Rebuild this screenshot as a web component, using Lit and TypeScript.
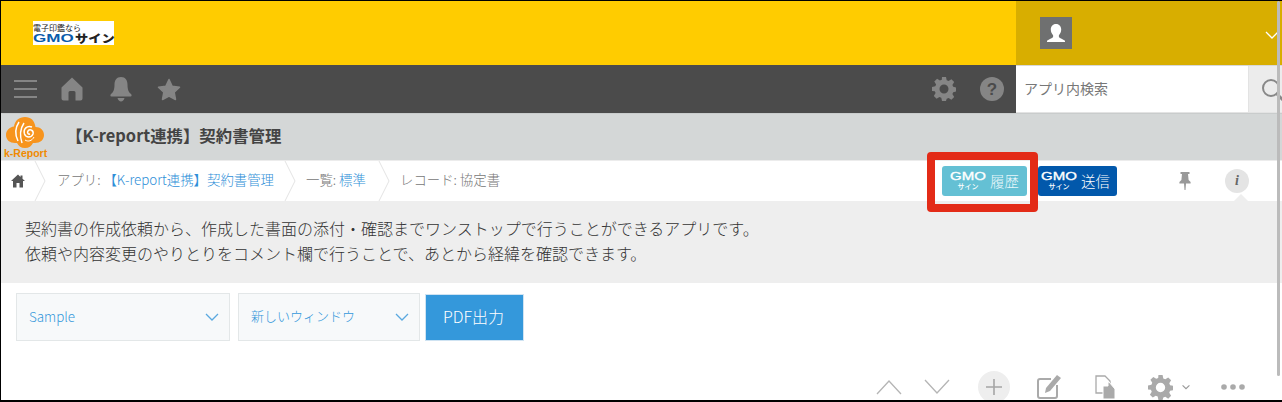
import { LitElement, html, css, svg } from "lit";
import { customElement } from "lit/decorators.js";

const chev = (c: string, w = 14, h = 8, sw = 1.3) => html`<svg width=${w} height=${h} viewBox="0 0 14 8"><path d="M1 1l6 6 6-6" fill="none" stroke=${c} stroke-width=${sw}/></svg>`;

const gmo = () => html`<span class="gmo"><b>GMO</b><i>サイン</i></span>`;

@customElement("app-root")
export class AppRoot extends LitElement {
  static styles = css`
    :host { display: block; position: relative; width: 1282px; height: 402px; overflow: hidden; box-sizing: border-box; border-top: 1px solid #000; border-left: 1px solid #000; border-bottom: 2px solid #000; background: #fff; font-family: "Noto Sans CJK JP", "Noto Sans", sans-serif; font-weight: 300; color: #555; }
    * { box-sizing: border-box; }
    .head { height: 64px; display: flex; background: #ffcc00; }
    .logo-wrap { flex: 1; padding: 20px 0 0 32px; }
    .logo { width: 81px; height: 24px; background: #fff; display: flex; flex-direction: column; line-height: 1; }
    .logo small { font-size: 8px; font-weight: 400; color: #222; height: 11px; padding-top: 2px; line-height: 9px; white-space: nowrap; }
    .logo span { display: flex; height: 13px; white-space: nowrap; }
    .logo b { font: 700 11px/13px "Liberation Sans", sans-serif; color: #0a5cab; display: block; width: 42px; transform: scaleX(1.55); transform-origin: left; }
    .logo em { font: 900 11px/13px "Noto Sans CJK JP", sans-serif; color: #222; display: block; transform: scaleX(1.2); transform-origin: left; }
    .user { width: 266px; background: #d8ae00; display: flex; justify-content: space-between; align-items: flex-start; padding: 16px 3px 0 24px; }
    .avatar { width: 32px; height: 32px; background: #6f7070; display: flex; }
    .user > svg { margin-top: 14px; }
    .nav { height: 48px; display: flex; background: #4b4b4b; }
    .nav-left { flex: 1; display: flex; align-items: center; padding-left: 13px; }
    .nav-left svg { display: block; }
    .burger { margin-right: 24px; }
    .bell { margin: 0 25px 0 27px; }
    .gear { margin-right: 24px; }
    .search { width: 266px; display: flex; background: #fff; border-bottom: 1px solid #e3e3e3; border-top: 1px solid #d8d8d8; }
    .search div:first-child { width: 233px; padding-left: 8px; font-size: 14px; font-weight: 400; line-height: 44px; color: #777; border-right: 1px solid #e3e3e3; }
    .search div:last-child { flex: 1; background: #ececec; padding: 12px 0 0 12px; overflow: hidden; }
    .title { height: 47px; background: #d4d7d7; display: flex; align-items: center; border-top: 1px solid #c9cccc; position: relative; }
    .k { width: 65px; padding: 1px 0 0 3px; display: flex; flex-direction: column; align-items: flex-start; line-height: 1; }
    .k svg { margin-left: 2px; display: block; }
    .k span { font: 700 10.5px/10px "Liberation Sans", sans-serif; color: #f08a00; }
    .title h1 { margin: 0 0 4px; font-size: 16.4px; font-weight: 700; color: #444; }
    .crumbs { height: 41px; display: flex; align-items: center; font-size: 13.4px; color: #777; border-top: 1px solid #ececec; }
    .c { height: 40px; display: flex; align-items: center; position: relative; white-space: pre; padding-bottom: 4px; }
    .c svg.sep { position: absolute; right: 0; top: 0; }
    .c a { color: #2f8fd8; }
    .c1 { width: 45px; padding-left: 10px; padding-bottom: 1px; }
    .c2 { width: 250px; padding-left: 11px; }
    .c3 { width: 94px; padding-left: 10px; }
    .c4 { flex: 1; padding-left: 10px; }
    .actions { display: flex; align-items: center; }
    .btn { height: 30px; border-radius: 3px; display: flex; align-items: center; color: #fff; font-size: 14.4px; gap: 4px; }
    .btn.a { width: 85px; background: #64c0d4; padding-left: 8px; margin-right: 11px; color: #e8f7fa; }
    .btn.b { width: 79px; background: #0258ab; padding-left: 3px; }
    .gmo { display: flex; flex-direction: column; align-items: center; width: 36px; line-height: 1; color: #fff; }
    .gmo b { font: 400 10px/10px "Liberation Sans", sans-serif; transform: scaleX(1.5); -webkit-text-stroke: .3px #fff; }
    .gmo i { font: 500 7px/8px "Noto Sans CJK JP", sans-serif; }
    .btn span:last-child { padding-bottom: 2px; }
    .pin { margin: 0 0 0 62px; }
    .info { width: 24px; height: 24px; border-radius: 50%; background: #e4e4e4; margin: 0 33px 0 34px; font: italic 700 14px/24px "Liberation Serif", serif; text-align: center; color: #666; }
    .desc { height: 82px; background: #eee; padding: 15px 0 0 24px; font-size: 16px; font-weight: 300; line-height: 25px; color: #333; position: relative; white-space: nowrap; }
    .desc::before { content: ""; position: absolute; right: 34px; top: -7px; border: 7px solid transparent; border-top: 0; border-bottom-color: #eee; }
    .tools { display: flex; padding: 10px 0 0 15px; height: 69px; }
    .sel { height: 48px; border: 1px solid #e3e7e8; background: #f7f9fa; display: flex; align-items: center; justify-content: space-between; color: #3498db; font-size: 13px; padding-bottom: 3px; }
    .sel svg { margin-top: 2px; }
    .s1 { width: 214px; padding-left: 12px; padding-right: 10px; margin-right: 8px; font-size: 13.4px; }
    .s2 { width: 182px; padding-left: 12px; padding-right: 10px; margin-right: 5px; }
    .pdf { width: 99px; height: 47px; background: #3498db; color: #fff; font-size: 16px; font-weight: 300; display: flex; align-items: center; justify-content: center; margin-top: 1px; border: 1px solid #cfe3f2; padding: 0 2px 3px 0; }
    .bottom { display: flex; align-items: center; justify-content: flex-end; height: 47px; padding: 23px 37px 0 0; }
    .bottom svg { display: block; flex: none; }
    .plus { width: 32px; height: 32px; border-radius: 50%; background: #eee; display: flex; align-items: center; justify-content: center; margin: 0 27px 0 28px; flex: none; }
    .highlight { position: absolute; left: 926px; top: 151px; width: 111px; height: 60px; border: 8px solid #e32b17; border-radius: 4px; pointer-events: none; }
    .thumb { position: absolute; right: 2px; top: 0; width: 3px; height: 375px; background: #bbb; border-radius: 2px; }
  `;

  render() {
    return html`
      <div class="head">
        <div class="logo-wrap"><div class="logo"><small>電子印鑑なら</small><span><b>GMO</b><em>サイン</em></span></div></div>
        <div class="user">
          <div class="avatar"><svg width="32" height="32" viewBox="0 0 32 32"><path fill="#fff" d="M16 7c-3.400 0-5.200 2.600-5.200 5.600 0 2.500 1 4.400 2.300 5.700v1.700c-1 1.300-4.100 2.100-6.100 3.700v1.300h18v-1.300c-2-1.600-5.100-2.400-6.100-3.700v-1.700c1.300-1.300 2.300-3.200 2.300-5.700C21.200 9.600 19.400 7 16 7z"/></svg></div>
          ${chev("#fff", 14, 8, 1.3)}
        </div>
      </div>
      <div class="nav">
        <div class="nav-left">
          <svg class="burger" width="23" height="20" viewBox="0 0 23 20"><path d="M0 2h23M0 10h23M0 18h23" stroke="#858585" stroke-width="2.200"/></svg>
          <svg width="22" height="24" viewBox="0 0 22 24"><path fill="#858585" d="M11 .5L.5 10.500V21.500a2 2 0 0 0 2 2h5v-8a1.500 1.500 0 0 1 1.500-1.500h4a1.500 1.500 0 0 1 1.500 1.500v8h5a2 2 0 0 0 2-2V10.500z"/></svg>
          <svg class="bell" width="22" height="25" viewBox="0 0 22 25"><path fill="#858585" d="M11 0C6.500 0 4.500 3.500 4.500 7.500c0 5-1 7.500-3.500 9.500-.8.6-1 2.500.5 2.500h19c1.500 0 1.300-1.900.5-2.500-2.500-2-3.500-4.500-3.500-9.500C17.500 3.500 15.500 0 11 0zM7.500 21h7c-.5 2.300-2 3.500-3.500 3.500S8 23.300 7.500 21z"/></svg>
          <svg width="24" height="23" viewBox="0 0 24 23"><path fill="#858585" stroke="#858585" stroke-width="1.500" stroke-linejoin="round" d="M12 1.500l3.200 6.800 7.300 1-5.300 5 1.300 7.200-6.500-3.500-6.500 3.500 1.300-7.200-5.300-5 7.300-1z"/></svg>
          <span style="flex:1"></span>
          <svg class="gear" width="24" height="24" viewBox="0 0 24 24"><path fill="#858585" fill-rule="evenodd" d="M10 0h4l.7 3.300 1.900.8 2.800-1.800 2.800 2.800-1.800 2.800.8 1.900 3.300.7v4l-3.300.7-.8 1.900 1.800 2.800-2.800 2.800-2.800-1.800-1.900.8L14 24h-4l-.7-3.300-1.900-.8-2.800 1.800-2.800-2.800 1.800-2.800-.8-1.900L0 14v-4l3.300-.7.8-1.900-1.800-2.800 2.800-2.800 2.800 1.800 1.900-.8zM12 7.500a4.500 4.500 0 1 0 0 9 4.500 4.500 0 0 0 0-9z"/></svg>
          <svg style="margin-right:12px" width="24" height="24" viewBox="0 0 24 24"><circle cx="12" cy="12" r="12" fill="#858585"/><text x="12" y="18" text-anchor="middle" font-family="Liberation Sans" font-weight="700" font-size="17" fill="#4b4b4b">?</text></svg>
        </div>
        <div class="search"><div>アプリ内検索</div><div><svg width="30" height="26" viewBox="0 0 30 26"><circle cx="10" cy="10" r="8" fill="none" stroke="#888" stroke-width="2"/><path d="M16 16l6 6" stroke="#888" stroke-width="3"/></svg></div></div>
      </div>
      <div class="title">
        <div class="k">
          <svg width="38" height="31" viewBox="0 0 38 31"><path fill="#f7941d" d="M19 0c6 0 9.500 3.500 10.500 10C34.500 10 38 13.500 38 18c0 5-4 8-9 8h-2c-1.500 3-4 5-8 5s-6.500-2-8-5H9c-5 0-9-3-9-8 0-4.500 3.500-8 8-8.500C9 3.500 13 0 19 0z"/><path fill="none" stroke="#fff" stroke-width="1.500" d="M12 24c-3-6-3-13 1-19M16 26c-2-6-2-14 2-20M26 10c-5-2-9 2-7.500 7 1.500 4 7 4 8.500 0 1-3.500-3-5.500-5-3-1.300 2 .5 3.500 2 3"/><path fill="none" stroke="#fff" stroke-width="1" d="M19 23c3 2 7 1 9-3"/></svg>
          <span>k-Report</span>
        </div>
        <h1>【K-report連携】契約書管理</h1>
      </div>
      <div class="crumbs">
        <div class="c c1"><svg width="14" height="14" viewBox="0 0 14 14"><path fill="#555" d="M7 .5L0 7h2v6.500h3.500V9h3v4.500H12V7h2l-2.500-2.300V1.500h-2v1.400z"/></svg>${this.sep()}</div>
        <div class="c c2">アプリ: <a>【K-report連携】契約書管理</a>${this.sep()}</div>
        <div class="c c3">一覧: <a>標準</a>${this.sep()}</div>
        <div class="c c4">レコード: 協定書</div>
        <div class="actions">
          <div class="btn a">${gmo()}<span>履歴</span></div>
          <div class="btn b">${gmo()}<span>送信</span></div>
          <svg class="pin" width="12" height="18" viewBox="0 0 12 18"><path fill="#999" d="M1.500 0h9v2H9l.6 6 2 2v1.500H7L6.500 18h-1L5 11.500H.4V10l2-2L3 2H1.500z"/></svg>
          <div class="info">i</div>
        </div>
      </div>
      <div class="desc">契約書の作成依頼から、作成した書面の添付・確認までワンストップで行うことができるアプリです。<br>依頼や内容変更のやりとりをコメント欄で行うことで、あとから経緯を確認できます。</div>
      <div class="tools">
        <div class="sel s1">Sample ${chev("#5aa9e0")}</div>
        <div class="sel s2">新しいウィンドウ ${chev("#5aa9e0")}</div>
        <div class="pdf">PDF出力</div>
      </div>
      <div class="bottom">
        <svg width="26" height="16" viewBox="0 0 26 16"><path d="M1 15L13 2l12 13" fill="none" stroke="#b5b5b5" stroke-width="1.300"/></svg>
        <svg style="margin-left:22px" width="26" height="16" viewBox="0 0 26 16"><path d="M1 1l12 13L25 1" fill="none" stroke="#b5b5b5" stroke-width="1.300"/></svg>
        <div class="plus"><svg width="16" height="16" viewBox="0 0 16 16"><path d="M8 0v16M0 8h16" stroke="#a5a5a5" stroke-width="1.600"/></svg></div>
        <svg width="24" height="24" viewBox="0 0 24 24"><path fill="none" stroke="#aaa" stroke-width="2" d="M14 4H3a2 2 0 0 0-2 2v15a2 2 0 0 0 2 2h15a2 2 0 0 0 2-2V10"/><path fill="#aaa" d="M20 0l4 3-11 13-5 2 1-5z"/></svg>
        <svg style="margin-left:34px" width="21" height="24" viewBox="0 0 21 24"><path fill="none" stroke="#aaa" stroke-width="1.300" d="M1 1h9l5 5v12H1z"/><path fill="#aaa" stroke="#fff" d="M8 11h5V7h1l6 7v10H8z"/></svg>
        <svg style="margin-left:32px" width="25" height="25" viewBox="0 0 24 24"><path fill="#aaa" fill-rule="evenodd" d="M10 0h4l.7 3.300 1.900.8 2.800-1.800 2.800 2.800-1.800 2.800.8 1.900 3.300.7v4l-3.300.7-.8 1.900 1.800 2.800-2.800 2.800-2.800-1.800-1.900.8L14 24h-4l-.7-3.300-1.900-.8-2.800 1.800-2.800-2.800 1.800-2.800-.8-1.900L0 14v-4l3.300-.7.8-1.900-1.800-2.800 2.800-2.800 2.800 1.800 1.900-.8zM12 7.500a4.500 4.500 0 1 0 0 9 4.500 4.500 0 0 0 0-9z"/></svg>
        <svg style="margin:0 31px 0 9px" width="8" height="6" viewBox="0 0 14 8"><path d="M1 1l6 6 6-6" fill="none" stroke="#999" stroke-width="2"/></svg>
        <svg width="24" height="6" viewBox="0 0 24 6"><circle cx="3" cy="3" r="2.800" fill="#aaa"/><circle cx="12" cy="3" r="2.800" fill="#aaa"/><circle cx="21" cy="3" r="2.800" fill="#aaa"/></svg>
      </div>
      <div class="highlight"></div>
      <div class="thumb"></div>
    `;
  }

  private sep() {
    return html`<svg class="sep" width="12" height="40" viewBox="0 0 12 40">${svg`<path d="M1 0l10 20L1 40" fill="none" stroke="#e3e3e3"/>`}</svg>`;
  }
}
